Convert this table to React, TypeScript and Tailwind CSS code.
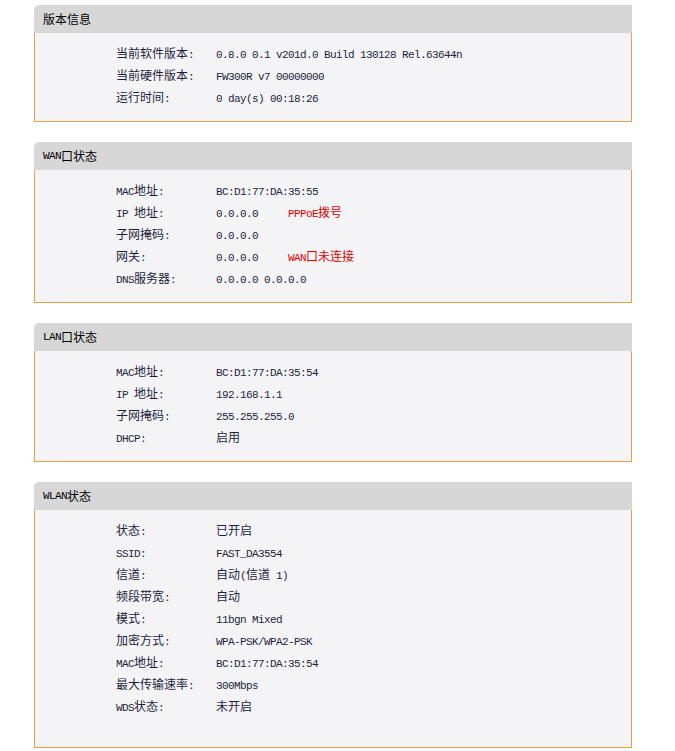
const sections = [
  {
    title: '版本信息',
    rows: [
      { label: '当前软件版本:', value: '0.8.0 0.1 v201d.0 Build 130128 Rel.63644n' },
      { label: '当前硬件版本:', value: 'FW300R v7 00000000' },
      { label: '运行时间:', value: '0 day(s) 00:18:26' },
    ],
  },
  {
    title: 'WAN口状态',
    rows: [
      { label: 'MAC地址:', value: 'BC:D1:77:DA:35:55' },
      { label: 'IP 地址:', value: '0.0.0.0', note: 'PPPoE拨号' },
      { label: '子网掩码:', value: '0.0.0.0' },
      { label: '网关:', value: '0.0.0.0', note: 'WAN口未连接' },
      { label: 'DNS服务器:', value: '0.0.0.0 0.0.0.0' },
    ],
  },
  {
    title: 'LAN口状态',
    rows: [
      { label: 'MAC地址:', value: 'BC:D1:77:DA:35:54' },
      { label: 'IP 地址:', value: '192.168.1.1' },
      { label: '子网掩码:', value: '255.255.255.0' },
      { label: 'DHCP:', value: '启用' },
    ],
  },
  {
    title: 'WLAN状态',
    extra: true,
    rows: [
      { label: '状态:', value: '已开启' },
      { label: 'SSID:', value: 'FAST_DA3554' },
      { label: '信道:', value: '自动(信道 1)' },
      { label: '频段带宽:', value: '自动' },
      { label: '模式:', value: '11bgn Mixed' },
      { label: '加密方式:', value: 'WPA-PSK/WPA2-PSK' },
      { label: 'MAC地址:', value: 'BC:D1:77:DA:35:54' },
      { label: '最大传输速率:', value: '300Mbps' },
      { label: 'WDS状态:', value: '未开启' },
    ],
  },
]

// CJK runs get the CJK face at 12px, latin runs a narrow mono like the router's SimSun
function Mixed({ text }: { text: string }) {
  const parts = text.split(/([\u4e00-\u9fff]+)/)
  return (
    <>
      {parts.map((p, i) =>
        /[\u4e00-\u9fff]/.test(p) ? (
          <span key={i} className="font-['Noto_Sans_CJK_SC',sans-serif] text-[12px]">
            {p}
          </span>
        ) : (
          <span key={i} className="font-['Liberation_Mono',monospace] text-[11px] tracking-[-0.6px] whitespace-pre">
            {p}
          </span>
        )
      )}
    </>
  )
}

export default function App() {
  return (
    <div className="w-[675px] h-[751px] bg-white pl-[34px] pt-[5px] flex flex-col gap-[20px]">
      {sections.map((s) => (
        <div key={s.title} className="w-[598px]">
          <div className="h-[28px] bg-[#d7d7d7] rounded-tl-[5px] pl-[9px] flex items-center text-black leading-none">
            <Mixed text={s.title} />
          </div>
          <div
            className={
              'bg-[#f4f4f6] border border-t-0 border-[#e6a04c] pl-[81px] pt-[8px] ' +
              (s.extra ? 'pb-[31px]' : 'pb-[14px]')
            }
          >
            {s.rows.map((r) => (
              <div key={r.label} className="flex h-[22px] items-center text-[#1e1e3c] leading-none">
                <div className="w-[100px]">
                  <Mixed text={r.label} />
                </div>
                <div className={r.note ? 'w-[72px]' : ''}>
                  <Mixed text={r.value} />
                </div>
                {r.note && (
                  <div className="text-[#e00000]">
                    <Mixed text={r.note} />
                  </div>
                )}
              </div>
            ))}
          </div>
        </div>
      ))}
    </div>
  )
}
